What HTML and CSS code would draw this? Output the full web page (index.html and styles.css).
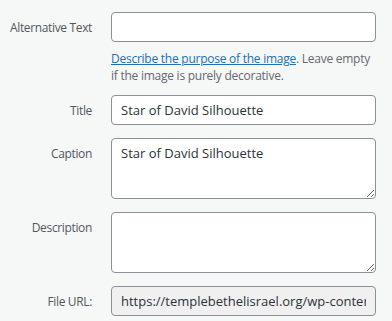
FILE: index.html
```html
<!DOCTYPE html>
<html lang="en">

<head>
    <meta charset="UTF-8">
    <meta name="viewport" content="width=device-width, initial-scale=1.0">
    <title>Attachment Details</title>
    <link rel="stylesheet" href="styles.css">
</head>

<body>
    <div class="attachment-settings">
        <label class="setting-label" for="alt-text">Alternative Text</label>
        <div class="setting-field">
            <input type="text" id="alt-text" class="text-input">
            <p class="help-text">
                <a href="#" class="help-link">Describe the purpose of the image</a>. Leave empty
                if the image is purely decorative.
            </p>
        </div>

        <label class="setting-label" for="title">Title</label>
        <div class="setting-field">
            <input type="text" id="title" class="text-input" value="Star of David Silhouette">
        </div>

        <label class="setting-label" for="caption">Caption</label>
        <div class="setting-field">
            <textarea id="caption" class="text-area">Star of David Silhouette</textarea>
        </div>

        <label class="setting-label" for="description">Description</label>
        <div class="setting-field">
            <textarea id="description" class="text-area"></textarea>
        </div>

        <label class="setting-label" for="file-url">File URL:</label>
        <div class="setting-field">
            <input type="text" id="file-url" class="text-input readonly" readonly
                value="https://templebethelisrael.org/wp-content/uploads/star-of-david-silhouette.png">
        </div>
    </div>
</body>

</html>
```

FILE: styles.css
```css
* {
    margin: 0;
    padding: 0;
    box-sizing: border-box;
}

html,
body {
    height: 100%;
    background: #f6f7f7;
    font-family: 'Open Sans', sans-serif;
    overflow: hidden;
}

.attachment-settings {
    display: grid;
    grid-template-columns: 92px 265px;
    column-gap: 19px;
    row-gap: 13px;
    padding-top: 12px;
    align-items: start;
}

.setting-label {
    color: #50575e;
    font-size: 12px;
    letter-spacing: -0.35px;
    text-align: right;
    line-height: 17px;
    padding-top: 7px;
}

.setting-field {
    display: flex;
    flex-direction: column;
}

.text-input,
.text-area {
    width: 100%;
    border: 1px solid #8c8f94;
    border-radius: 4px;
    background: #fff;
    color: #2c3338;
    font-family: 'Open Sans', sans-serif;
    font-size: 13px;
    padding: 0 9px;
    outline: none;
}

.text-input {
    height: 30px;
    line-height: 28px;
}

.text-area {
    height: 61px;
    padding-top: 5px;
    line-height: 18px;
    resize: vertical;
}

.readonly {
    background: #f0f0f1;
}

.help-text {
    color: #646970;
    font-size: 12px;
    letter-spacing: -0.25px;
    line-height: 17px;
    margin-top: 8px;
    margin-bottom: -2px;
    padding-right: 6px;
}

.help-link {
    color: #2271b1;
    text-decoration: underline;
}
```
